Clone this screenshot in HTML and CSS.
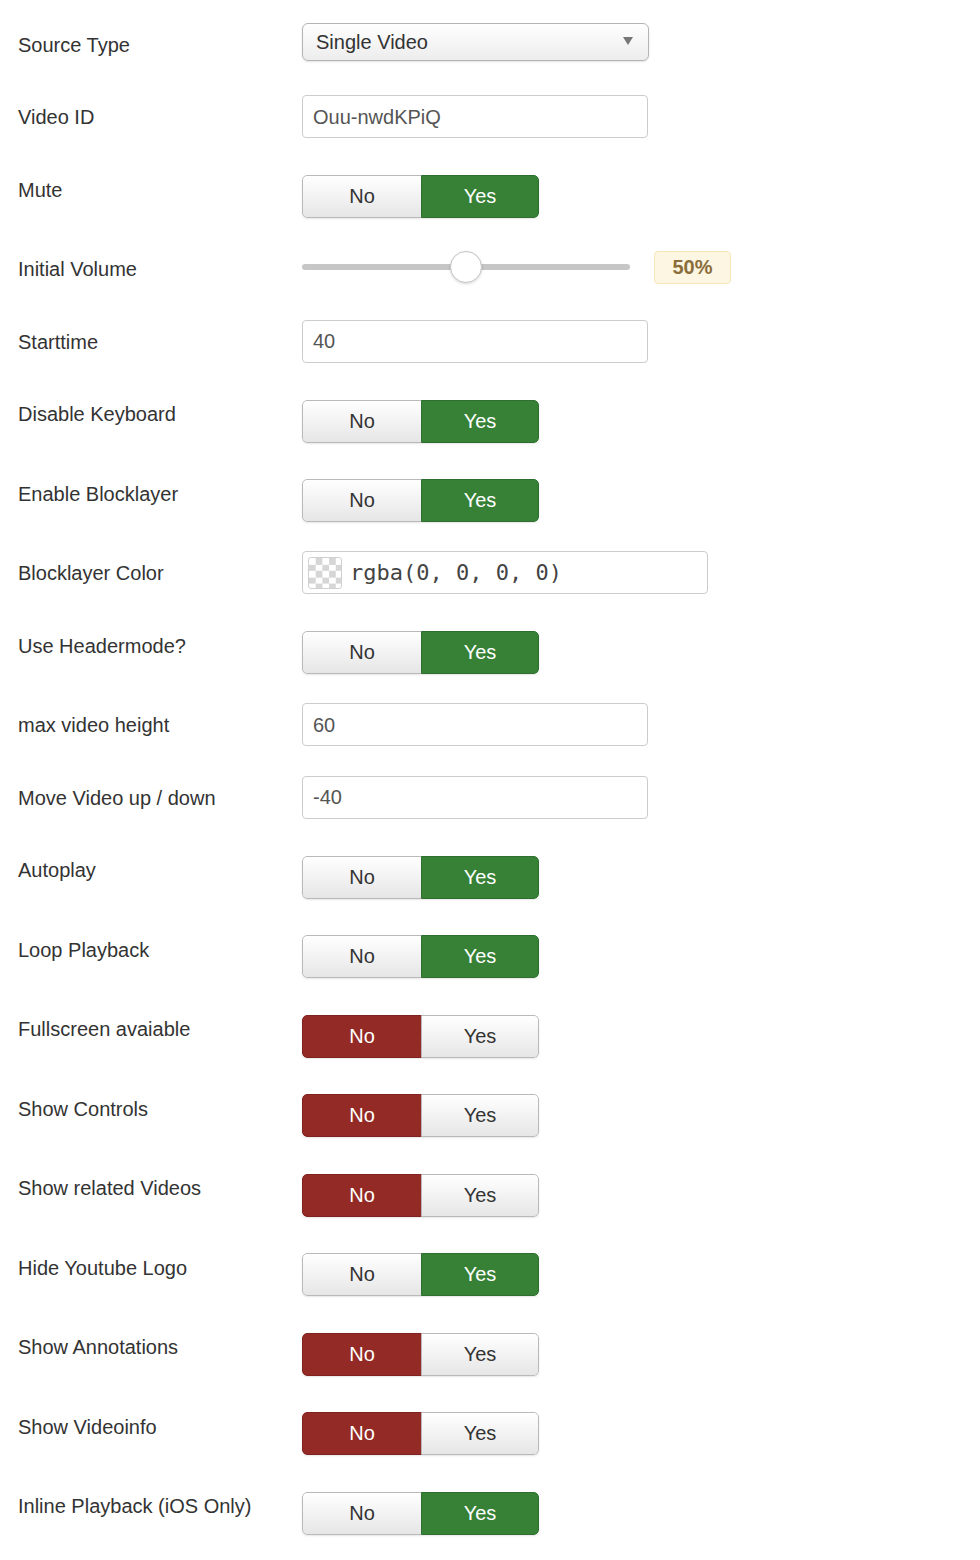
FILE: index.html
```html
<!DOCTYPE html>
<html>
<head>
<meta charset="utf-8">
<link rel="stylesheet" href="styles.css">
</head>
<body>
<form class="form">
  <div class="row">
    <div class="label">Source Type</div>
    <div class="ctrl"><div class="select"><span>Single Video</span><span class="caret"></span></div></div>
  </div>
  <div class="row">
    <div class="label">Video ID</div>
    <div class="ctrl"><div class="input">Ouu-nwdKPiQ</div></div>
  </div>
  <div class="row tg">
    <div class="label">Mute</div>
    <div class="ctrl"><div class="toggle"><span class="opt">No</span><span class="opt yes">Yes</span></div></div>
  </div>
  <div class="row">
    <div class="label">Initial Volume</div>
    <div class="ctrl slider-ctrl">
      <div class="track"><div class="thumb"></div></div>
      <div class="badge">50%</div>
    </div>
  </div>
  <div class="row">
    <div class="label">Starttime</div>
    <div class="ctrl"><div class="input">40</div></div>
  </div>
  <div class="row tg">
    <div class="label">Disable Keyboard</div>
    <div class="ctrl"><div class="toggle"><span class="opt">No</span><span class="opt yes">Yes</span></div></div>
  </div>
  <div class="row tg">
    <div class="label">Enable Blocklayer</div>
    <div class="ctrl"><div class="toggle"><span class="opt">No</span><span class="opt yes">Yes</span></div></div>
  </div>
  <div class="row">
    <div class="label">Blocklayer Color</div>
    <div class="ctrl"><div class="input color"><span class="swatch"></span><span class="mono">rgba(0, 0, 0, 0)</span></div></div>
  </div>
  <div class="row tg">
    <div class="label">Use Headermode?</div>
    <div class="ctrl"><div class="toggle"><span class="opt">No</span><span class="opt yes">Yes</span></div></div>
  </div>
  <div class="row">
    <div class="label">max video height</div>
    <div class="ctrl"><div class="input">60</div></div>
  </div>
  <div class="row">
    <div class="label">Move Video up / down</div>
    <div class="ctrl"><div class="input">-40</div></div>
  </div>
  <div class="row tg">
    <div class="label">Autoplay</div>
    <div class="ctrl"><div class="toggle"><span class="opt">No</span><span class="opt yes">Yes</span></div></div>
  </div>
  <div class="row tg">
    <div class="label">Loop Playback</div>
    <div class="ctrl"><div class="toggle"><span class="opt">No</span><span class="opt yes">Yes</span></div></div>
  </div>
  <div class="row tg">
    <div class="label">Fullscreen avaiable</div>
    <div class="ctrl"><div class="toggle"><span class="opt no">No</span><span class="opt">Yes</span></div></div>
  </div>
  <div class="row tg">
    <div class="label">Show Controls</div>
    <div class="ctrl"><div class="toggle"><span class="opt no">No</span><span class="opt">Yes</span></div></div>
  </div>
  <div class="row tg">
    <div class="label">Show related Videos</div>
    <div class="ctrl"><div class="toggle"><span class="opt no">No</span><span class="opt">Yes</span></div></div>
  </div>
  <div class="row tg">
    <div class="label">Hide Youtube Logo</div>
    <div class="ctrl"><div class="toggle"><span class="opt">No</span><span class="opt yes">Yes</span></div></div>
  </div>
  <div class="row tg">
    <div class="label">Show Annotations</div>
    <div class="ctrl"><div class="toggle"><span class="opt no">No</span><span class="opt">Yes</span></div></div>
  </div>
  <div class="row tg">
    <div class="label">Show Videoinfo</div>
    <div class="ctrl"><div class="toggle"><span class="opt no">No</span><span class="opt">Yes</span></div></div>
  </div>
  <div class="row tg">
    <div class="label">Inline Playback (iOS Only)</div>
    <div class="ctrl"><div class="toggle"><span class="opt">No</span><span class="opt yes">Yes</span></div></div>
  </div>
</form>
</body>
</html>
```

FILE: styles.css
```css
html, body {
  margin: 0;
  padding: 0;
  background: #fff;
}
body {
  font-family: "Liberation Sans", Arial, sans-serif;
  font-size: 20px;
  color: #333;
}
.form {
  padding: 22.5px 0 0 18px;
}
.row {
  display: flex;
  align-items: flex-start;
  margin-bottom: 29.5px;
}
.row.tg {
  margin-bottom: 29px;
}
.label {
  width: 284px;
  flex: none;
  padding-top: 10px;
  line-height: 25px;
  color: #333;
}
.ctrl {
  min-height: 43px;
  display: flex;
  align-items: flex-start;
}
.select {
  box-sizing: border-box;
  width: 347px;
  height: 38px;
  border: 1px solid #b4b4b4;
  border-radius: 6px;
  background: linear-gradient(#ffffff, #ededed);
  box-shadow: 0 1px 2px rgba(0,0,0,0.12);
  display: flex;
  align-items: center;
  justify-content: space-between;
  padding: 0 15px 0 13px;
  color: #333;
  line-height: 24px;
}
.caret {
  width: 0;
  height: 0;
  border-left: 5px solid transparent;
  border-right: 5px solid transparent;
  border-top: 8px solid #777;
  margin-top: -2px;
}
.input {
  box-sizing: border-box;
  width: 346px;
  height: 43px;
  border: 1px solid #ccc;
  border-radius: 4px;
  background: #fff;
  padding: 0 10px;
  display: flex;
  align-items: center;
  color: #555;
  line-height: 24px;
}
.input.color {
  width: 406px;
  padding: 0 5px;
  gap: 8px;
}
.swatch {
  width: 34px;
  height: 32px;
  box-sizing: border-box;
  border: 1px solid #d0d0d0;
  border-radius: 3px;
  background: repeating-conic-gradient(#d6d6d6 0 25%, #ffffff 0 50%) 0 0 / 13.4px 12.8px;
  flex: none;
}
.mono {
  font-family: "DejaVu Sans Mono", "Liberation Mono", monospace;
  font-size: 22px;
  color: #444;
}
.toggle {
  margin-top: 7.5px;
  display: flex;
  width: 237px;
  height: 43px;
  box-sizing: border-box;
  border-radius: 5px;
  overflow: hidden;
  box-shadow: 0 1px 2px rgba(0,0,0,0.1);
}
.opt {
  flex: 1;
  display: flex;
  align-items: center;
  justify-content: center;
  background: linear-gradient(#ffffff, #e6e6e6);
  border: 1px solid #b9b9b9;
  color: #333;
}
.opt:first-child {
  flex: none;
  width: 120px;
  box-sizing: border-box;
  border-radius: 5px 0 0 5px;
}
.opt:last-child {
  border-radius: 0 5px 5px 0;
  border-left: 1px solid #b9b9b9;
  margin-left: -1px;
}
.opt.yes {
  background: #378137;
  border-color: #2e6e2e;
  color: #fff;
}
.opt.no {
  background: #932a25;
  border-color: #7e231f;
  color: #fff;
}
.slider-ctrl {
  align-items: center;
  height: 43px;
}
.track {
  position: relative;
  width: 328px;
  height: 6px;
  border-radius: 3px;
  background: #c6c6c6;
  margin-top: -3px;
}
.thumb {
  position: absolute;
  left: 148px;
  top: -13px;
  width: 32px;
  height: 32px;
  box-sizing: border-box;
  border-radius: 50%;
  background: #fff;
  border: 1px solid #c4c4c4;
  box-shadow: 0 1px 3px rgba(0,0,0,0.15);
}
.badge {
  margin-left: 24px;
  margin-top: -3px;
  box-sizing: border-box;
  width: 77px;
  height: 33px;
  border: 1px solid #f6e6b8;
  border-radius: 4px;
  background: #fcf6e2;
  color: #8a6d3b;
  font-weight: bold;
  display: flex;
  align-items: center;
  justify-content: center;
}
```
